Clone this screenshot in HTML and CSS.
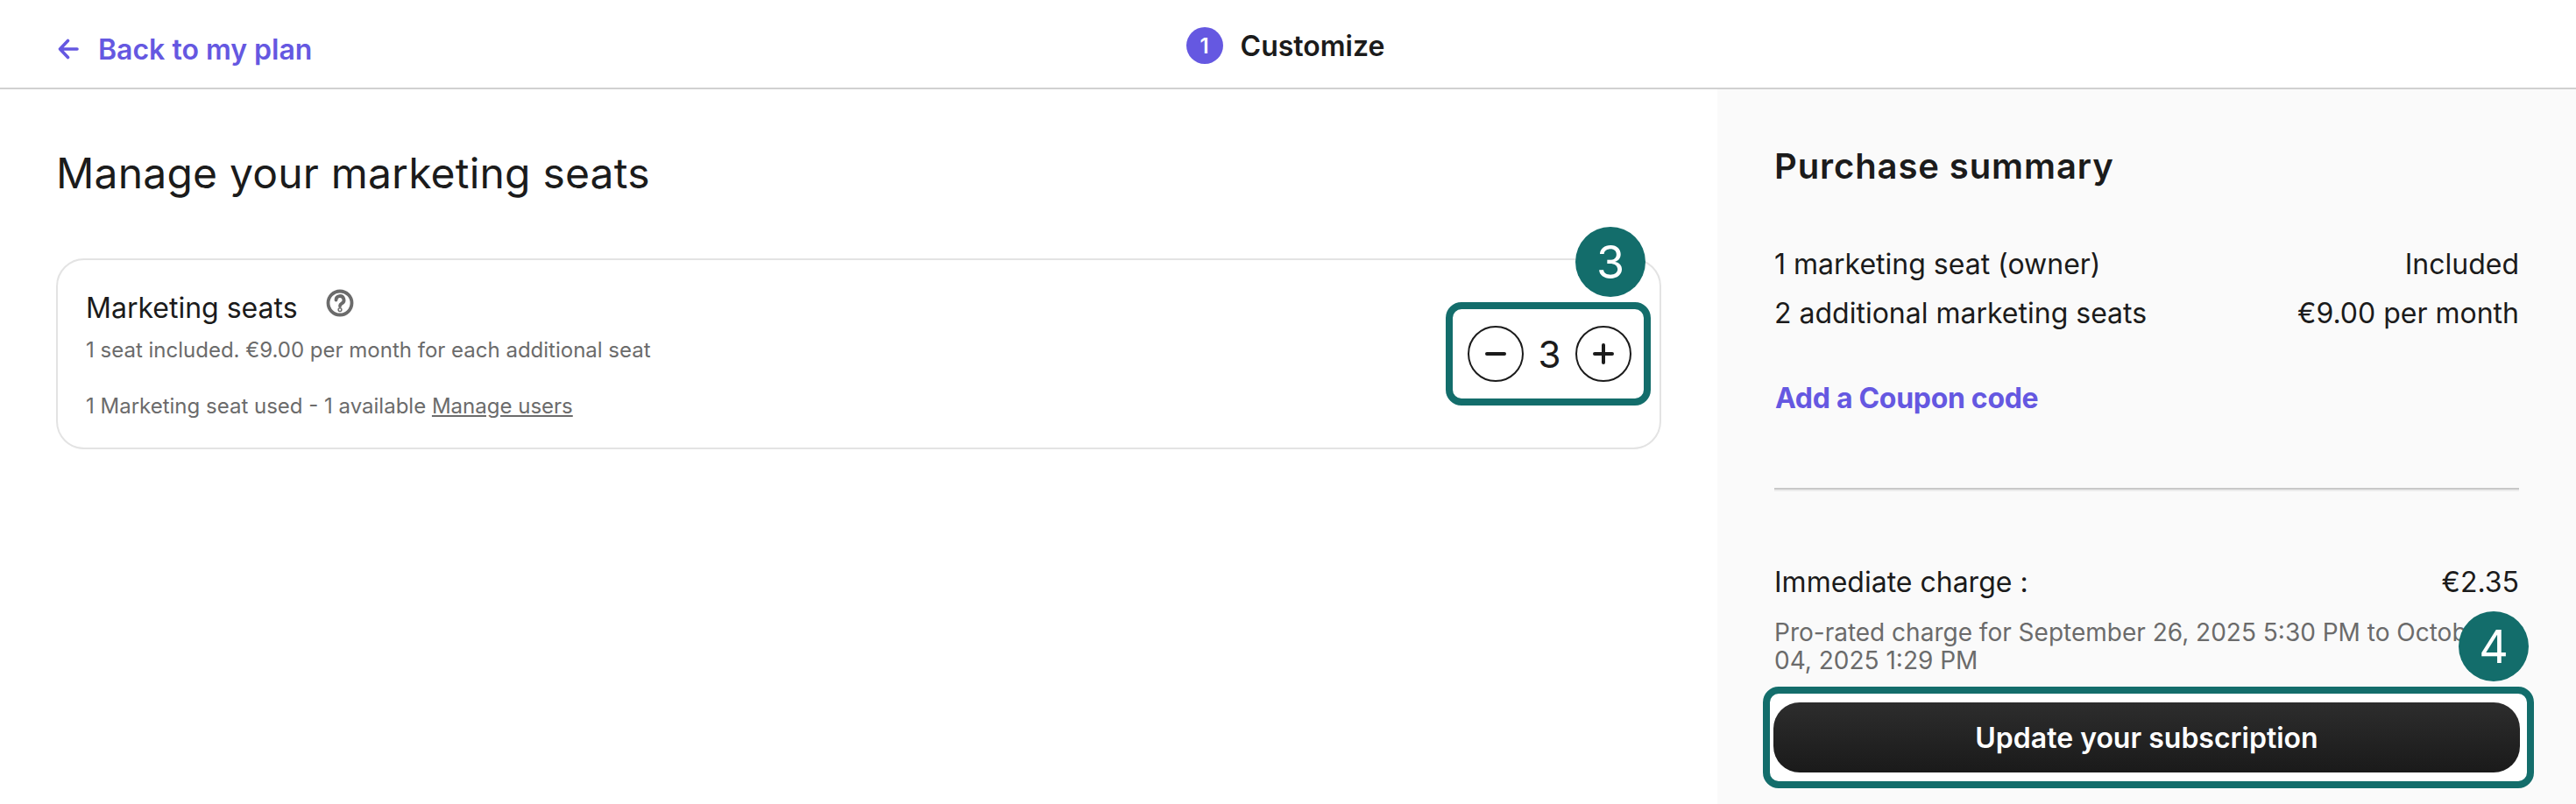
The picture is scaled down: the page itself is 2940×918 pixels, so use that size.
FILE: index.html
```html
<!DOCTYPE html>
<html lang="en">
<head>
    <meta charset="UTF-8">
    <title>Manage your marketing seats</title>
    <link rel="stylesheet" href="styles.css">
</head>
<body>
    <!-- Top bar -->
    <header class="topbar">
        <a class="back-link" href="#">
            <svg class="back-icon" viewBox="0 0 24 24" fill="none" stroke="currentColor" stroke-width="3.6" stroke-linecap="round" stroke-linejoin="round"><path d="M22 12H3M11.500 2.500L2.500 12l9 9.500"/></svg>
            Back to my plan
        </a>
        <div class="step">
            <span class="step-number">1</span>
            <span class="step-label">Customize</span>
        </div>
    </header>

    <div class="page">
        <!-- Seats -->
        <main class="content">
            <h1>Manage your marketing seats</h1>
            <section class="seat-card">
                <div class="seat-info">
                    <div class="seat-title">
                        Marketing seats
                        <svg class="help-icon" viewBox="0 0 32 32" fill="none" stroke="currentColor" stroke-width="3.8" stroke-linecap="round"><circle cx="16" cy="16" r="13.500"/><path d="M11.500 12.500a4.500 4.500 0 1 1 6.600 4c-1.400.8-2.100 1.500-2.100 2.800"/><circle cx="16" cy="23.600" r=".7"/></svg>
                    </div>
                    <p class="seat-note">1 seat included. €9.00 per month for each additional seat</p>
                    <p class="seat-used">1 Marketing seat used - 1 available <a href="#">Manage users</a></p>
                </div>
                <div class="stepper">
                    <span class="marker marker-seats">3</span>
                    <button class="round-btn" type="button">
                        <svg viewBox="0 0 24 24" stroke="currentColor" stroke-width="4" stroke-linecap="round"><path d="M2 12h20"/></svg>
                    </button>
                    <span class="seat-count">3</span>
                    <button class="round-btn" type="button">
                        <svg viewBox="0 0 24 24" stroke="currentColor" stroke-width="4" stroke-linecap="round"><path d="M2 12h20M12 2v20"/></svg>
                    </button>
                </div>
            </section>
        </main>

        <!-- Summary -->
        <aside class="summary">
            <h2>Purchase summary</h2>
            <div class="line-items">
                <div class="line"><span>1 marketing seat (owner)</span><span>Included</span></div>
                <div class="line"><span>2 additional marketing seats</span><span>€9.00 per month</span></div>
            </div>
            <a class="coupon" href="#">Add a Coupon code</a>
            <hr class="divider">
            <div class="line charge"><span>Immediate charge :</span><span>€2.35</span></div>
            <p class="charge-note">Pro-rated charge for September 26, 2025 5:30 PM to October 04, 2025 1:29 PM</p>
            <div class="submit-box">
                <span class="marker marker-submit">4</span>
                <button class="submit" type="button">Update your subscription</button>
            </div>
        </aside>
    </div>
</body>
</html>
```

FILE: styles.css
```css
* {
    box-sizing: border-box;
}

html, body {
    height: 100%;
}

body {
    margin: 0;
    display: flex;
    flex-direction: column;
    overflow: hidden;
    background-color: #ffffff;
    color: #1b1b1b;
    font-family: Inter, "Noto Sans", sans-serif;
}

/* Top bar */
.topbar {
    display: grid;
    grid-template-columns: 1fr auto 1fr;
    height: 102px;
    padding: 0 66px;
    flex-shrink: 0;
    border-bottom: 2px solid #d1d1d1;
}

.back-link {
    grid-column: 1;
    justify-self: start;
    display: flex;
    align-items: center;
    gap: 22px;
    margin-top: 12px;
    color: #6558e1;
    font-size: 32px;
    font-weight: 600;
    text-decoration: none;
}

.back-icon {
    width: 24px;
    height: 24px;
}

.step {
    grid-column: 2;
    display: flex;
    align-items: center;
    gap: 20px;
    height: 100px;
    margin-left: -6px;
    padding-top: 4px;
}

.step-number {
    display: flex;
    align-items: center;
    justify-content: center;
    width: 42px;
    height: 42px;
    border-radius: 50%;
    background-color: #6558e1;
    color: #ffffff;
    font-size: 24px;
    font-weight: 600;
}

.step-label {
    font-size: 32px;
    font-weight: 600;
}

.page {
    display: flex;
    flex: 1;
    min-height: 0;
}

/* Seats */
.content {
    flex: 1;
    padding: 68px 64px 0 64px;
}

h1 {
    margin: 0 0 69px 0;
    font-size: 48px;
    line-height: 56px;
    font-weight: 400;
    letter-spacing: 0.2px;
}

.seat-card {
    display: flex;
    align-items: center;
    justify-content: space-between;
    height: 218px;
    padding: 0 10px 0 32px;
    border: 2px solid #e3e3e3;
    border-radius: 32px;
}

.seat-info {
    padding-top: 4px;
}

.seat-title {
    display: flex;
    align-items: center;
    gap: 32px;
    font-size: 32px;
    line-height: 40px;
}

.help-icon {
    width: 32px;
    height: 32px;
    margin-top: -12px;
    color: #6b6b6b;
}

.seat-note, .seat-used {
    margin: 0;
    color: #6b6b6b;
    font-size: 24px;
    line-height: 32px;
}

.seat-note {
    margin-top: 12px;
}

.seat-used {
    margin-top: 32px;
}

.seat-used a {
    color: #6b6b6b;
}

.stepper {
    position: relative;
    display: flex;
    align-items: center;
    justify-content: space-between;
    width: 234px;
    height: 118px;
    padding: 0 14px 0 17px;
    border: 8px solid #136d6b;
    border-radius: 18px;
    background-color: #ffffff;
}

.round-btn {
    display: flex;
    align-items: center;
    justify-content: center;
    width: 64px;
    height: 64px;
    padding: 0;
    border: 2px solid #1b1b1b;
    border-radius: 50%;
    background: none;
    color: #1b1b1b;
}

.round-btn svg {
    width: 24px;
    height: 24px;
}

.seat-count {
    font-size: 42px;
}

/* Numbered markers over the highlighted boxes */
.marker {
    position: absolute;
    display: flex;
    align-items: center;
    justify-content: center;
    width: 80px;
    height: 80px;
    border-radius: 50%;
    background-color: #136d6b;
    color: #ffffff;
    font-size: 52px;
}

.marker-seats {
    top: -94px;
    right: -2px;
}

.marker-submit {
    top: -94px;
    right: -2px;
}

/* Summary */
.summary {
    width: 980px;
    padding: 62px 65px 0 65px;
    flex-shrink: 0;
    background-color: #fafafa;
}

h2 {
    margin: 0;
    font-size: 40px;
    line-height: 52px;
    font-weight: 600;
    letter-spacing: 0.9px;
}

.line-items {
    margin-top: 58px;
}

.line {
    display: flex;
    justify-content: space-between;
    font-size: 32px;
    line-height: 56px;
}

.coupon {
    display: block;
    margin: 49px 0 0 1px;
    color: #6558e1;
    font-size: 32px;
    line-height: 40px;
    font-weight: 700;
    letter-spacing: -0.3px;
    text-decoration: none;
}

.divider {
    height: 4px;
    margin: 82px 0 0 0;
    border: none;
    border-top: 2px solid #c8c8c8;
    background-color: #ececec;
}

.charge {
    margin-top: 84px;
    line-height: 40px;
}

.charge-note {
    margin: 21px 0 0 0;
    color: #6b6b6b;
    font-size: 28px;
    line-height: 32px;
}

.submit-box {
    position: relative;
    width: 880px;
    height: 116px;
    margin: 14px 0 0 -13px;
    padding: 10px 4px;
    border: 8px solid #136d6b;
    border-radius: 18px;
    background-color: #ffffff;
}

.submit {
    display: block;
    width: 852px;
    height: 80px;
    padding: 0;
    border: none;
    border-radius: 30px;
    background: linear-gradient(#2d2d2d, #1a1a1a);
    color: #ffffff;
    font-family: inherit;
    font-size: 32px;
    font-weight: 600;
}
```
